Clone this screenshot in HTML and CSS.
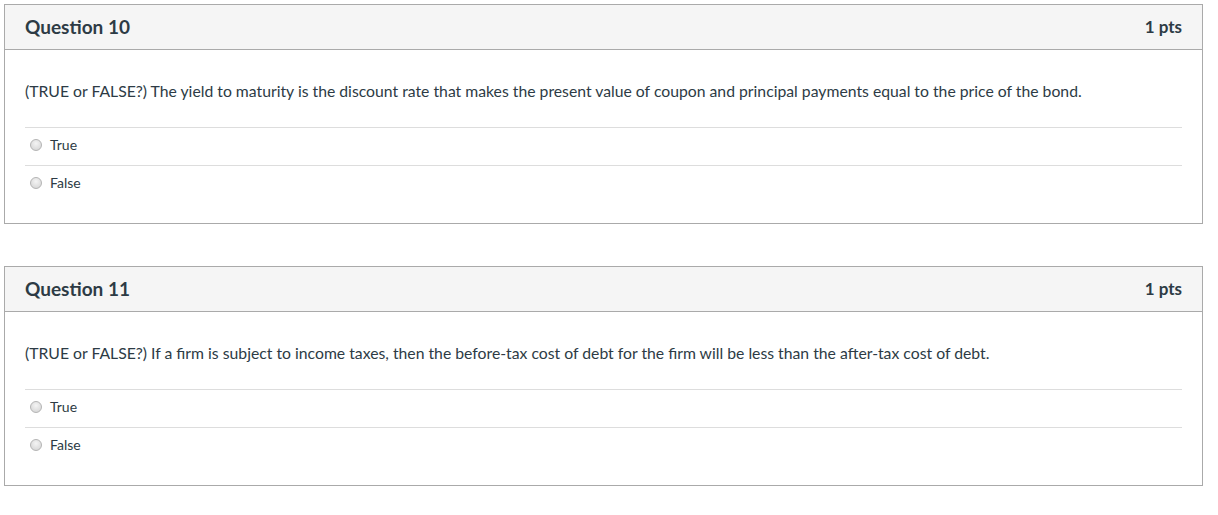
FILE: index.html
```html
<!DOCTYPE html>
<html>
<head>
<meta charset="utf-8">
<link rel="stylesheet" href="styles.css">
</head>
<body>
<div class="page">
  <div class="question">
    <div class="q-header">
      <span class="q-title">Question 10</span>
      <span class="q-pts">1 pts</span>
    </div>
    <div class="q-body">
      <p class="q-text">(TRUE or FALSE?) The yield to maturity is the discount rate that makes the present value of coupon and principal payments equal to the price of the bond.</p>
      <div class="answers">
        <label class="answer"><span class="radio"></span><span class="answer-label">True</span></label>
        <label class="answer"><span class="radio"></span><span class="answer-label">False</span></label>
      </div>
    </div>
  </div>
  <div class="question">
    <div class="q-header">
      <span class="q-title">Question 11</span>
      <span class="q-pts">1 pts</span>
    </div>
    <div class="q-body">
      <p class="q-text">(TRUE or FALSE?) If a firm is subject to income taxes, then the before-tax cost of debt for the firm will be less than the after-tax cost of debt.</p>
      <div class="answers">
        <label class="answer"><span class="radio"></span><span class="answer-label">True</span></label>
        <label class="answer"><span class="radio"></span><span class="answer-label">False</span></label>
      </div>
    </div>
  </div>
</div>
</body>
</html>
```
FILE: styles.css
```css
html, body {
  margin: 0;
  padding: 0;
  background: #ffffff;
}
body {
  font-family: Lato, "Open Sans", sans-serif;
  color: #2d3b45;
}
.page {
  padding: 4px 15px 0 4px;
  display: flex;
  flex-direction: column;
  gap: 42px;
}
.question {
  border: 1px solid #aaaaaa;
  background: #fff;
}
.q-header {
  height: 45px;
  box-sizing: border-box;
  padding: 0 20px 1px 20px;
  background: #f5f5f5;
  border-bottom: 1px solid #aaaaaa;
  display: flex;
  align-items: center;
  justify-content: space-between;
}
.q-title {
  font-weight: 700;
  font-size: 19px;
}
.q-pts {
  font-weight: 700;
  font-size: 17px;
}
.q-body {
  padding: 31px 20px 20px 20px;
}
.q-text {
  margin: 0 0 26px 0;
  font-size: 15.75px;
  line-height: 20px;
}
.answers {
  display: flex;
  flex-direction: column;
}
.answer {
  display: flex;
  align-items: center;
  height: 34px;
  padding: 0 0 3px 5px;
  border-top: 1px solid #dddddd;
  font-size: 14px;
}
.radio {
  width: 10px;
  height: 10px;
  border-radius: 50%;
  border: 1px solid #b4b4b4;
  background: radial-gradient(circle at 50% 35%, #f4f4f4 0%, #dcdcdc 70%, #cfcfcf 100%);
  margin-right: 8px;
}
.answer-label {
  line-height: 16px;
}
```
